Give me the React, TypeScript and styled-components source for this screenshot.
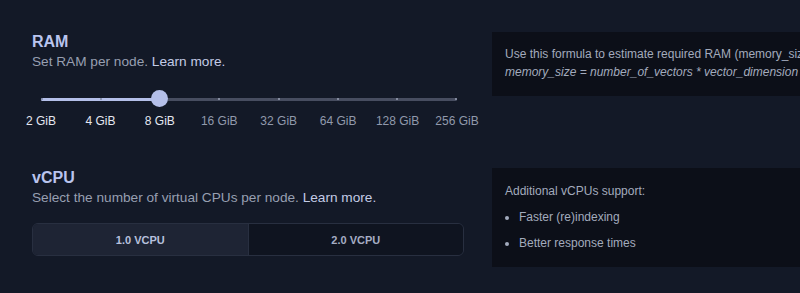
import {useState} from "react";
import styled, {createGlobalStyle} from "styled-components";

const GlobalStyle = createGlobalStyle`
  html, body {
    margin: 0;
    padding: 0;
    background-color: #131927;
    overflow: hidden;
  }
  body {
    font-family: "Liberation Sans", Arial, sans-serif;
  }
`;

const Page = styled.div`
  display: grid;
  grid-template-columns: 432px 432px;
  column-gap: 28px;
  row-gap: 39px;
  align-items: start;
  padding: 32px 0 0 32px;
  width: 1000px;
`;

const Section = styled.section`
  display: flex;
  flex-direction: column;
`;

const Title = styled.h2`
  margin: 0;
  font-size: 16px;
  line-height: 20px;
  font-weight: 700;
  color: #b9c4ee;
`;

const Subtitle = styled.p`
  margin: 0;
  font-size: 13.65px;
  line-height: 20px;
  color: #979fb1;

  a {
    color: #c3cbe6;
    text-decoration: none;
  }
`;

const Slider = styled.div`
  margin: 18px 7px 0 9px;
`;

const TrackArea = styled.div`
  position: relative;
  height: 18px;
  display: flex;
  align-items: center;
`;

const Track = styled.div`
  position: relative;
  flex: 1;
  height: 3px;
  border-radius: 2px;
  background-color: #474d60;
`;

const Fill = styled.div`
  position: absolute;
  left: 0;
  top: 0;
  bottom: 0;
  border-radius: 2px;
  background-color: #b4bfe9;
`;

const Ticks = styled.div`
  position: absolute;
  inset: 0;
  display: flex;
  justify-content: space-between;
  align-items: center;
`;

const Tick = styled.span<{ $active: boolean }>`
  width: 2px;
  height: 2px;
  border-radius: 1px;
  background-color: ${p => p.$active ? "#7f88a3" : "#9aa2b6"};
`;

const Thumb = styled.div`
  position: absolute;
  top: 0;
  width: 17px;
  height: 17px;
  margin-left: -8.5px;
  border-radius: 50%;
  background-color: #b4bfe9;
  cursor: pointer;
`;

const Labels = styled.div`
  display: grid;
  grid-template-columns: repeat(8, 1fr);
  margin: 5px -29.7px 0;
`;

const Label = styled.button<{ $active: boolean }>`
  background: none;
  border: none;
  padding: 0;
  font: inherit;
  font-size: 12px;
  line-height: 16px;
  text-align: center;
  color: ${p => p.$active ? "#e4e7f1" : "#9199ac"};
  cursor: pointer;
`;

const Segmented = styled.div`
  display: flex;
  margin-top: 15px;
  height: 31px;
  border: 1px solid #282f40;
  border-radius: 6px;
  overflow: hidden;
`;

const Segment = styled.button<{ $selected: boolean }>`
  flex: 1;
  border: none;
  padding: 0;
  font-family: inherit;
  font-size: 11px;
  font-weight: 700;
  color: ${p => p.$selected ? "#b7c0dd" : "#a5adc4"};
  background-color: ${p => p.$selected ? "#1e2434" : "#0f1420"};
  cursor: pointer;

  & + & {
    border-left: 1px solid #282f40;
  }
`;

const Info = styled.aside<{ $top?: number }>`
  background-color: #0c0f18;
  padding: ${p => p.$top ?? 13}px 13px 15px;
  font-size: 12px;
  line-height: 18px;
  color: #a3abbd;
  white-space: nowrap;

  p {
    margin: 0;
  }

  em {
    display: block;
  }
`;

const List = styled.ul`
  margin: 8px 0 0;
  padding: 0 0 0 14px;

  li {
    margin-bottom: 7.5px;
  }

  li:last-child {
    margin-bottom: 0;
  }
`;

const ramSteps = ["2 GiB", "4 GiB", "8 GiB", "16 GiB", "32 GiB", "64 GiB", "128 GiB", "256 GiB"];
const cpuOptions = ["1.0 VCPU", "2.0 VCPU"];

function App() {
    const [ram, setRam] = useState(2);
    const [cpu, setCpu] = useState(0);
    const pct = (ram / (ramSteps.length - 1)) * 100;

    return (
        <Page>
            <GlobalStyle/>
            <Section>
                <Title>RAM</Title>
                <Subtitle>Set RAM per node. <a href="#">Learn more.</a></Subtitle>
                <Slider>
                    <TrackArea>
                        <Track>
                            <Fill style={{width: `${pct}%`}}/>
                            <Ticks>
                                {ramSteps.map((s, i) => <Tick key={s} $active={i <= ram}/>)}
                            </Ticks>
                        </Track>
                        <Thumb style={{left: `${pct}%`}}/>
                    </TrackArea>
                    <Labels>
                        {ramSteps.map((s, i) => (
                            <Label key={s} $active={i <= ram} onClick={() => setRam(i)}>{s}</Label>
                        ))}
                    </Labels>
                </Slider>
            </Section>
            <Info>
                <p>Use this formula to estimate required RAM (memory_size) in bytes:</p>
                <em>memory_size = number_of_vectors * vector_dimension * 4 bytes * 1.5</em>
            </Info>

            <Section>
                <Title>vCPU</Title>
                <Subtitle>Select the number of virtual CPUs per node. <a href="#">Learn more.</a></Subtitle>
                <Segmented>
                    {cpuOptions.map((o, i) => (
                        <Segment key={o} $selected={i === cpu} onClick={() => setCpu(i)}>{o}</Segment>
                    ))}
                </Segmented>
            </Section>
            <Info $top={14}>
                <p>Additional vCPUs support:</p>
                <List>
                    <li>Faster (re)indexing</li>
                    <li>Better response times</li>
                </List>
            </Info>
        </Page>
    )
}

export default App
